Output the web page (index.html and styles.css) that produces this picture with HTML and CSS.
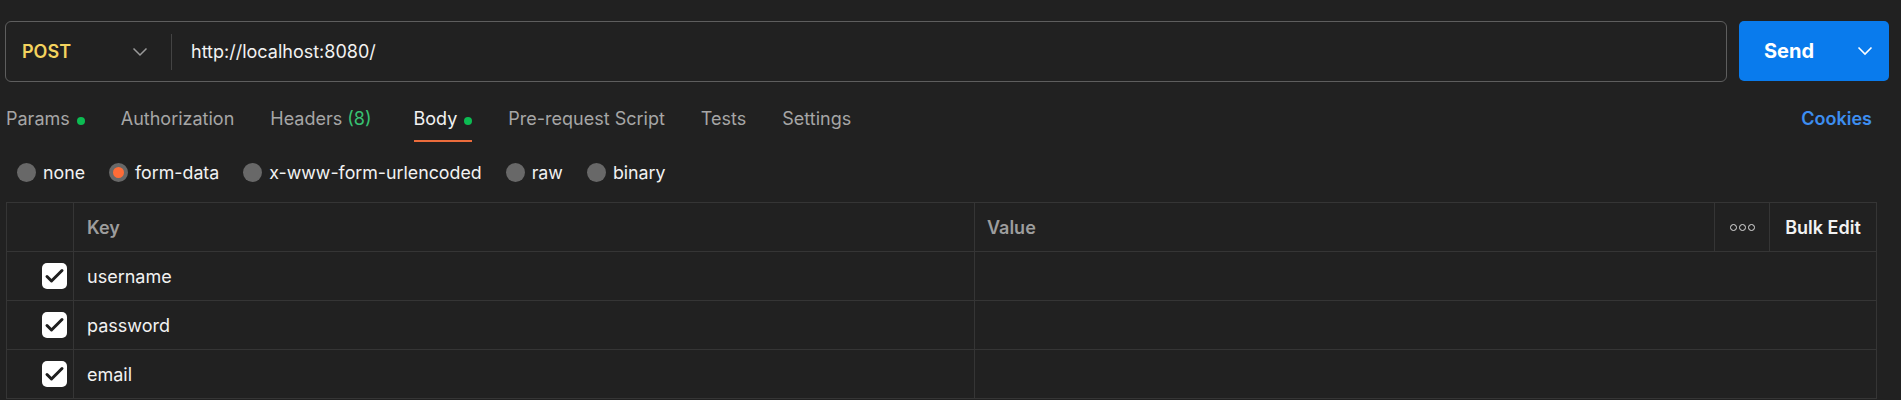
FILE: index.html
```html
<!DOCTYPE html>
<html>
<head>
<meta charset="utf-8">
<link rel="stylesheet" href="styles.css">
</head>
<body>
<div class="app">
  <div class="request-row">
    <div class="url-bar">
      <div class="method">
        <span class="method-name">POST</span>
        <svg class="chev" width="16" height="10" viewBox="0 0 16 10"><path d="M1.5 1.5 L8 8 L14.5 1.5" fill="none" stroke="#9a9a9a" stroke-width="1.5"/></svg>
      </div>
      <div class="sep"></div>
      <div class="url">http://localhost:8080/</div>
    </div>
    <div class="send">
      <span class="send-label">Send</span>
      <svg class="send-chev" width="16" height="10" viewBox="0 0 16 10"><path d="M1.5 1.5 L8 8 L14.5 1.5" fill="none" stroke="#fff" stroke-width="1.6"/></svg>
    </div>
  </div>

  <div class="tabs-row">
    <div class="tabs">
      <div class="tab">Params <span class="dot"></span></div>
      <div class="tab">Authorization</div>
      <div class="tab tab-headers">Headers <span class="count">(8)</span></div>
      <div class="tab active">Body <span class="dot"></span></div>
      <div class="tab">Pre-request Script</div>
      <div class="tab">Tests</div>
      <div class="tab">Settings</div>
    </div>
    <div class="cookies">Cookies</div>
  </div>

  <div class="radios">
    <div class="radio"><span class="circle"></span>none</div>
    <div class="radio"><span class="circle on"></span>form-data</div>
    <div class="radio"><span class="circle"></span>x-www-form-urlencoded</div>
    <div class="radio"><span class="circle"></span>raw</div>
    <div class="radio"><span class="circle"></span>binary</div>
  </div>

  <div class="table">
    <div class="row head">
      <div class="cell c-check"></div>
      <div class="cell c-key">Key</div>
      <div class="cell c-val">Value</div>
      <div class="cell c-more"><span class="dots"><i></i><i></i><i></i></span></div>
      <div class="cell c-bulk">Bulk Edit</div>
    </div>
    <div class="row">
      <div class="cell c-check"><svg class="cb" width="25" height="26" viewBox="0 0 25 26"><rect x="0" y="0" width="25" height="26" rx="5" fill="#fff"/><path d="M5 13.5 L9.5 18 L20 7.5" fill="none" stroke="#1e1e1e" stroke-width="3" stroke-linecap="round" stroke-linejoin="round"/></svg></div>
      <div class="cell c-key text">username</div>
      <div class="cell c-rest"></div>
    </div>
    <div class="row">
      <div class="cell c-check"><svg class="cb" width="25" height="26" viewBox="0 0 25 26"><rect x="0" y="0" width="25" height="26" rx="5" fill="#fff"/><path d="M5 13.5 L9.5 18 L20 7.5" fill="none" stroke="#1e1e1e" stroke-width="3" stroke-linecap="round" stroke-linejoin="round"/></svg></div>
      <div class="cell c-key text">password</div>
      <div class="cell c-rest"></div>
    </div>
    <div class="row">
      <div class="cell c-check"><svg class="cb" width="25" height="26" viewBox="0 0 25 26"><rect x="0" y="0" width="25" height="26" rx="5" fill="#fff"/><path d="M5 13.5 L9.5 18 L20 7.5" fill="none" stroke="#1e1e1e" stroke-width="3" stroke-linecap="round" stroke-linejoin="round"/></svg></div>
      <div class="cell c-key text">email</div>
      <div class="cell c-rest"></div>
    </div>
  </div>
</div>
</body>
</html>
```

FILE: styles.css
```css
html, body {
  margin: 0;
  padding: 0;
  background: #212121;
  font-family: Inter, "Noto Sans", sans-serif;
  color: #f0f0f0;
  overflow: hidden;
}
.app {
  width: 1901px;
  height: 400px;
}
.request-row {
  display: flex;
  padding: 21px 12px 0 5px;
  gap: 12px;
  height: 61px;
}
.url-bar {
  flex: 1;
  display: flex;
  align-items: center;
  border: 1px solid #5e5e5e;
  border-radius: 6px;
  box-sizing: border-box;
  height: 61px;
}
.method {
  width: 165px;
  display: flex;
  align-items: center;
  box-sizing: border-box;
  padding-left: 16px;
}
.method-name {
  color: #f4d35e;
  font-weight: 600;
  font-size: 18px;
  width: 110px;
}
.chev { display: block; }
.sep {
  width: 1px;
  height: 36px;
  background: #444;
}
.url {
  padding-left: 19px;
  font-size: 18px;
  color: #f2f2f2;
}
.send {
  width: 150px;
  height: 60px;
  background: #097bed;
  border-radius: 5px;
  display: flex;
  align-items: center;
  box-sizing: border-box;
  padding-left: 25px;
}
.send-label {
  font-weight: 700;
  font-size: 20px;
  color: #fff;
  width: 93px;
}
.send-chev { display: block; }
.tabs-row {
  display: flex;
  justify-content: space-between;
  align-items: flex-start;
  padding: 15px 31px 0 6px;
  height: 61px;
  box-sizing: border-box;
}
.tabs {
  display: flex;
}
.tab {
  font-size: 18px;
  color: #a6a6a6;
  height: 45px;
  box-sizing: border-box;
  padding-top: 11px;
  margin-right: 36px;
  display: flex;
  align-items: flex-start;
  gap: 7px;
  border-bottom: 2px solid transparent;
}
.tab-headers { margin-right: 42px; gap: 6px; }
.tab.active {
  color: #f2f2f2;
  border-bottom-color: #ec6c3c;
}
.dot {
  width: 8px;
  height: 8px;
  border-radius: 50%;
  background: #0cbb52;
  margin-top: 9px;
}
.count { color: #38c172; margin-left: -1px; }
.cookies {
  color: #3d8ef0;
  font-weight: 600;
  font-size: 18px;
  padding-top: 11px;
  margin-right: -2px;
}
.radios {
  display: flex;
  align-items: center;
  padding-left: 17px;
  height: 44px;
  margin-top: 7px;
}
.radio {
  display: flex;
  align-items: center;
  font-size: 17.8px;
  color: #f2f2f2;
  margin-right: 24px;
}
.circle {
  width: 19px;
  height: 19px;
  border-radius: 50%;
  background: #686868;
  margin-right: 7px;
  box-sizing: border-box;
}
.circle.on {
  background: #ff6c37;
  border: 4px solid #686868;
}
.table {
  margin: 8px 24px 0 6px;
  border-top: 1px solid #353535;
  border-left: 1px solid #353535;
  border-right: 1px solid #353535;
}
.row {
  display: flex;
  height: 49px;
  box-sizing: border-box;
  border-bottom: 1px solid #353535;
}
.cell {
  display: flex;
  align-items: center;
  box-sizing: border-box;
  font-size: 18px;
}
.c-check {
  width: 67px;
  border-right: 1px solid #353535;
  justify-content: flex-end;
  padding-right: 6px;
}
.c-key {
  width: 901px;
  border-right: 1px solid #353535;
  padding-left: 13px;
}
.head .cell {
  color: #9d9d9d;
  font-weight: 600;
  font-size: 18px;
}
.c-val {
  width: 740px;
  border-right: 1px solid #353535;
  padding-left: 12px;
}
.c-more {
  width: 55px;
  border-right: 1px solid #353535;
  justify-content: center;
}
.c-bulk {
  flex: 1;
  justify-content: center;
}
.head .c-bulk { color: #f2f2f2; }
.c-rest { flex: 1; }
.dots { display: flex; gap: 2px; }
.dots i {
  width: 5px;
  height: 5px;
  border: 1.3px solid #ddd;
  border-radius: 50%;
}
.text { color: #f2f2f2; }
.cb { display: block; }
```
